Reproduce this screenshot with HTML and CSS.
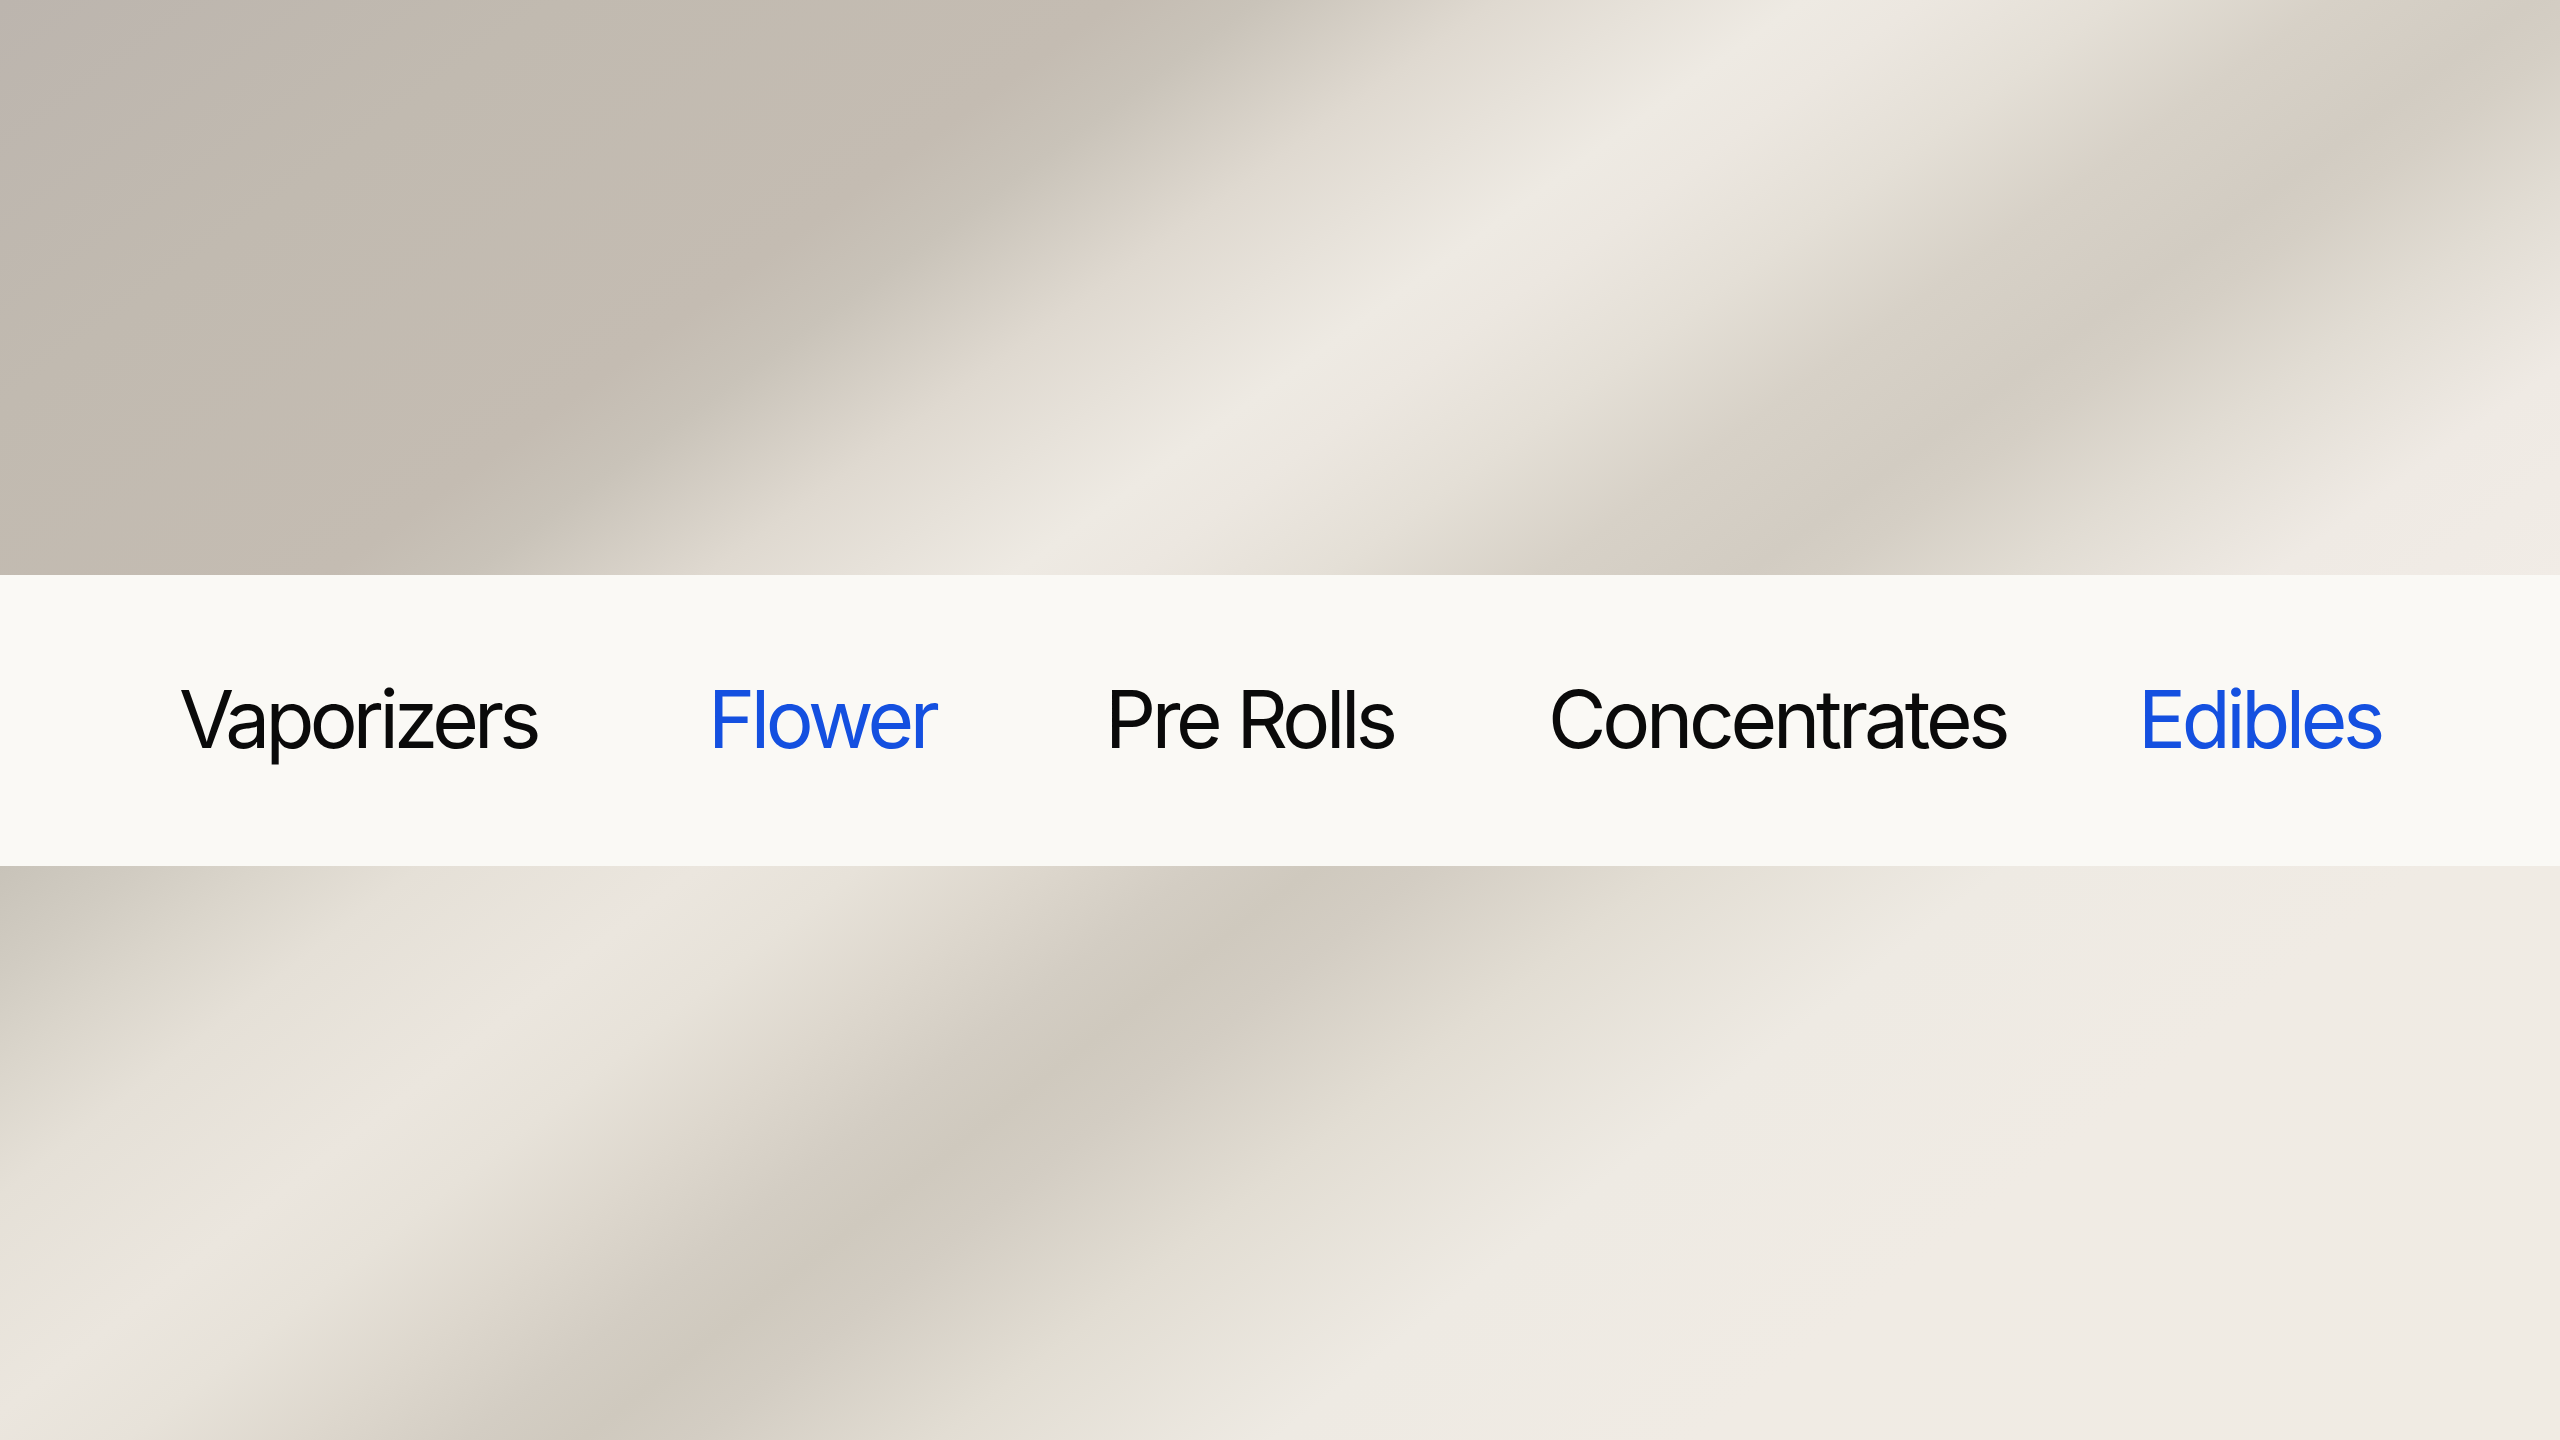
FILE: index.html
```html
<!DOCTYPE html>
<html lang="en">
<head>
<meta charset="utf-8">
<title>Categories</title>
<link rel="stylesheet" href="styles.css">
</head>
<body>
<main class="page">
  <div class="backdrop backdrop-top"></div>
  <nav class="band">
    <a class="item item-a">Vaporizers</a>
    <a class="item item-b accent">Flower</a>
    <a class="item item-c">Pre Rolls</a>
    <a class="item item-d">Concentrates</a>
    <a class="item item-e accent">Edibles</a>
  </nav>
  <div class="backdrop backdrop-bottom"></div>
</main>
</body>
</html>
```
FILE: styles.css
```css
html, body { margin: 0; padding: 0; }
body { background: #e8e3da; overflow: hidden; }
.page { width: 2560px; height: 1440px; display: flex; flex-direction: column; overflow: hidden; }
.backdrop { flex: 1 1 0; }
.backdrop-top {
  flex: 0 0 575px;
  background: linear-gradient(144deg, #bcb5ae 0, #c1bab0 330px, #c4bcb2 658px, #c9c3b9 740px, #dfd9d0 880px, #eeeae3 1060px, #ece7e0 1130px, #e4dfd6 1246px, #d7d1c7 1370px, #d2ccc2 1490px, #d5cfc5 1540px, #e1dcd3 1650px, #efeae4 1800px, #f1ece6 1980px);
}
.backdrop-bottom {
  flex: 0 0 574px;
  background: linear-gradient(142deg, #c8c3b9 0, #d1ccc2 87px, #dad5cb 160px, #e5e0d7 260px, #ebe6de 431px, #e7e2d9 530px, #ddd7cd 640px, #d3cdc3 740px, #cfc9be 810px, #d3cdc3 880px, #e2ddd3 1030px, #eeeae3 1236px, #f0ebe4 1500px, #f0ebe2 2400px);
}
.band {
  flex: 0 0 291px;
  box-sizing: border-box;
  background: #faf9f5;
  display: grid;
  grid-template-columns: 529px 397px 443px 590px 1fr;
  align-items: center;
  padding-left: 179px;
  padding-bottom: 4px;
}
.item {
  font-family: Inter, "Liberation Sans", sans-serif;
  font-size: 80px;
  font-weight: 400;
  letter-spacing: -4.4px;
  color: #0a0a0a;
  white-space: nowrap;
}
.item-a { letter-spacing: -4.8px; }
.item-d { letter-spacing: -4.2px; }
.accent { color: #1450e0; }
```
